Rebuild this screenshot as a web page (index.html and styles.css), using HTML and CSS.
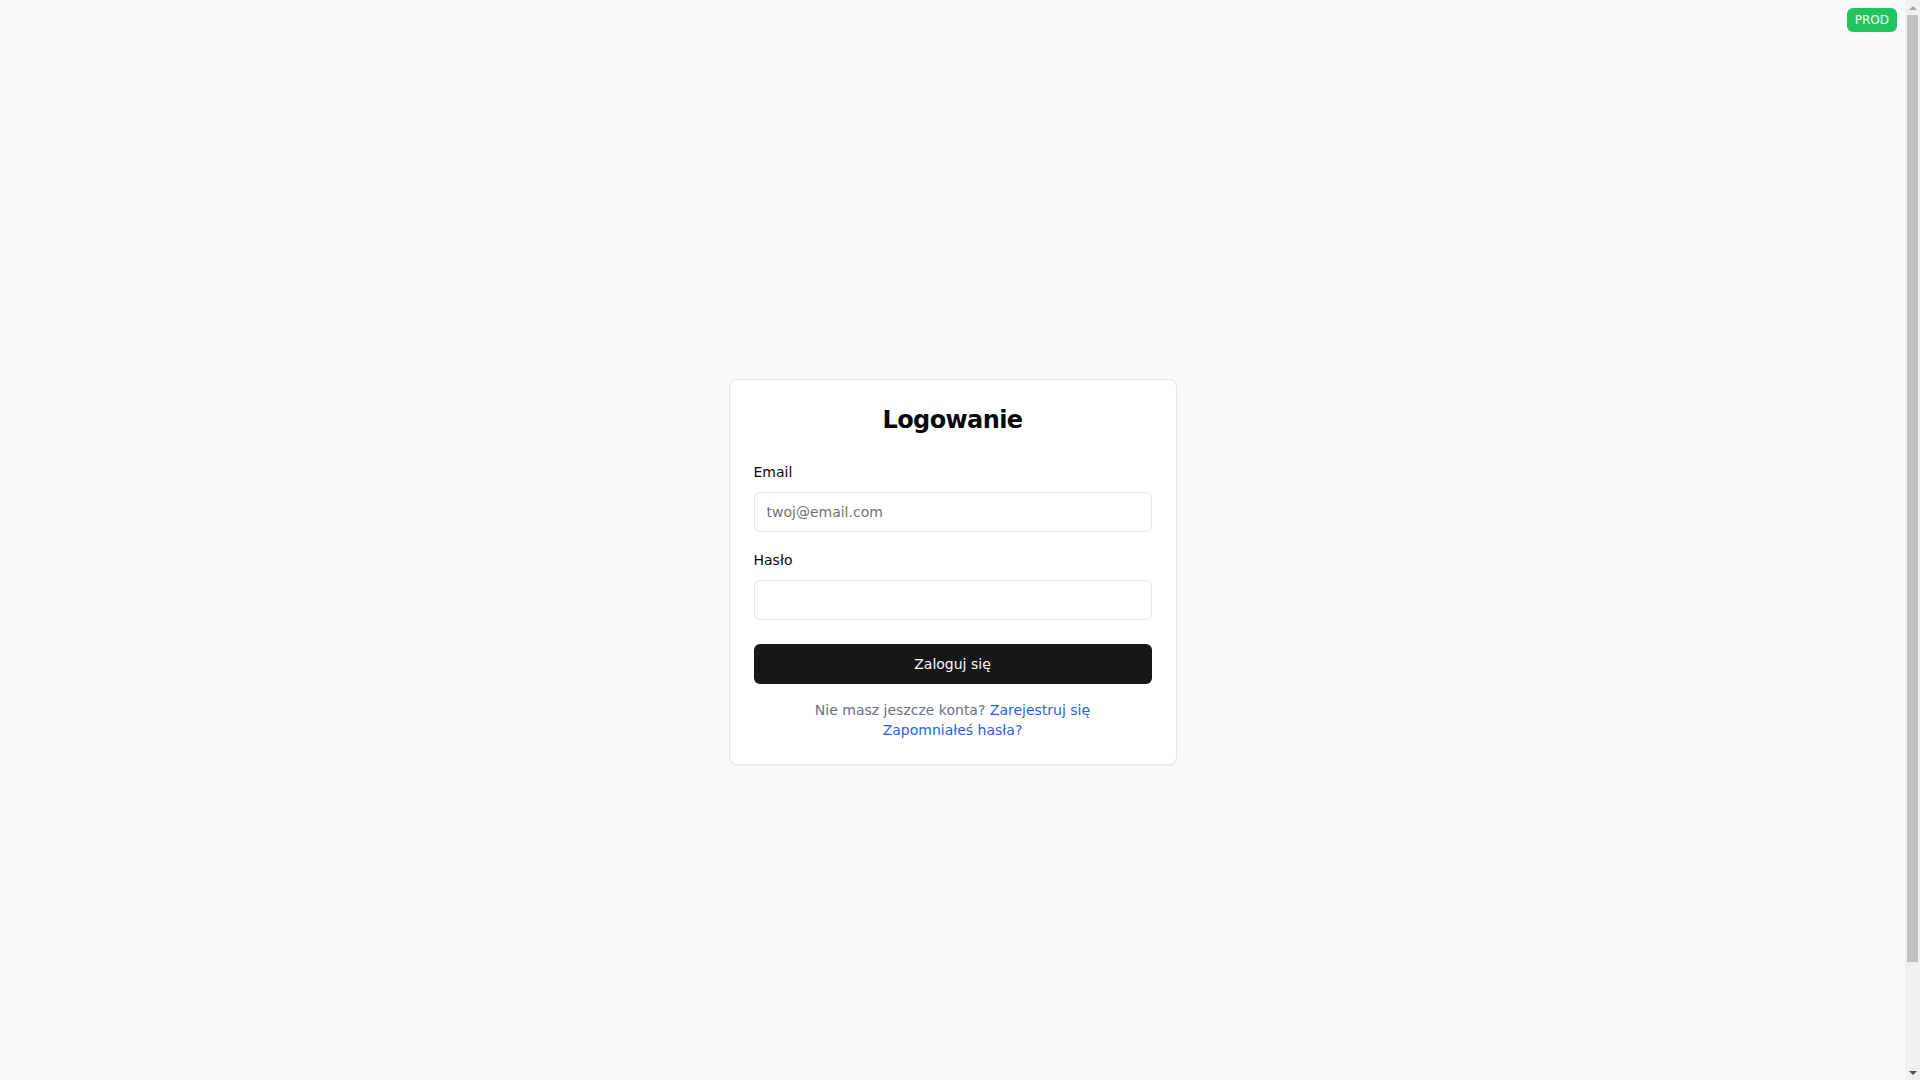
FILE: index.html
```html
<!DOCTYPE html>
<html lang="pl">
<head>
<meta charset="utf-8">
<title>Logowanie</title>
<link rel="stylesheet" href="styles.css">
</head>
<body>
<div class="viewport">
  <span class="env-badge">PROD</span>
  <main class="page">
    <div class="card">
      <h1 class="title">Logowanie</h1>
      <form class="form">
        <div class="field">
          <label class="label" for="email">Email</label>
          <input class="input" id="email" type="email" placeholder="twoj@email.com">
        </div>
        <div class="field">
          <label class="label" for="password">Hasło</label>
          <input class="input" id="password" type="password">
        </div>
        <button class="btn" type="button">Zaloguj się</button>
      </form>
      <div class="footer">
        <p class="line">Nie masz jeszcze konta? <a class="link" href="#">Zarejestruj się</a></p>
        <p class="line"><a class="link" href="#">Zapomniałeś hasła?</a></p>
      </div>
    </div>
  </main>
</div>
<div class="scrollbar" aria-hidden="true">
  <span class="sb-arrow sb-up"></span>
  <span class="sb-thumb"></span>
  <span class="sb-arrow sb-down"></span>
</div>
</body>
</html>
```

FILE: styles.css
```css
* { box-sizing: border-box; }
html, body { margin: 0; padding: 0; }
body {
  background: #f9fafb;
  font-family: "DejaVu Sans", sans-serif;
  color: #0a0a0a;
}
.viewport {
  margin-right: 15px;
}
.env-badge {
  position: fixed;
  top: 8px;
  right: 23px;
  background: #22c55e;
  color: #ffffff;
  font-size: 12px;
  line-height: 16px;
  padding: 4px 8px;
  border-radius: 6px;
}
.page {
  min-height: 100vh;
  box-sizing: content-box;
  padding: 32px 0 85px;
  display: flex;
  align-items: center;
  justify-content: center;
}
.card {
  width: 448px;
  background: #ffffff;
  border: 1px solid #e5e7eb;
  border-radius: 8px;
  box-shadow: 0 1px 2px rgba(0,0,0,0.05);
  padding: 24px;
}
.title {
  margin: 0 0 26px;
  font-size: 24px;
  line-height: 32px;
  font-weight: 700;
  letter-spacing: -0.025em;
  text-align: center;
  color: #0a0a0a;
}
.form {
  display: flex;
  flex-direction: column;
}
.field {
  display: flex;
  flex-direction: column;
  margin-bottom: 18px;
}
.field + .field { margin-bottom: 24px; }
.label {
  font-size: 14px;
  line-height: 20px;
  margin-bottom: 10px;
  color: #0a0a0a;
}
.input {
  height: 40px;
  width: 100%;
  border: 1px solid #e5e7eb;
  border-radius: 6px;
  background: #ffffff;
  padding: 0 12px;
  font-family: "DejaVu Sans", sans-serif;
  font-size: 14px;
  color: #0a0a0a;
  outline: none;
}
.input::placeholder { color: #737373; }
.btn {
  height: 40px;
  width: 100%;
  border: none;
  border-radius: 6px;
  background: #171717;
  color: #fafafa;
  font-family: "DejaVu Sans", sans-serif;
  font-size: 14px;
  cursor: pointer;
}
.footer {
  margin-top: 16px;
  text-align: center;
}
.line {
  margin: 0;
  font-size: 14px;
  line-height: 20px;
  color: #6b7280;
}
.link {
  color: #2563eb;
  text-decoration: none;
}
.scrollbar {
  position: fixed;
  top: 0;
  right: 0;
  width: 15px;
  height: 100vh;
  background: #f1f1f1;
  display: flex;
  flex-direction: column;
  align-items: center;
}
.sb-arrow {
  flex: none;
  width: 15px;
  height: 15px;
  display: flex;
  align-items: center;
  justify-content: center;
}
.sb-arrow::before {
  content: "";
  width: 0;
  height: 0;
  border-left: 4px solid transparent;
  border-right: 4px solid transparent;
}
.sb-up::before { border-bottom: 4px solid #a3a3a3; }
.sb-down { margin-top: auto; }
.sb-down::before { border-top: 4px solid #505050; }
.sb-thumb {
  flex: none;
  width: 11px;
  height: 947px;
  background: #c1c1c1;
}
```
